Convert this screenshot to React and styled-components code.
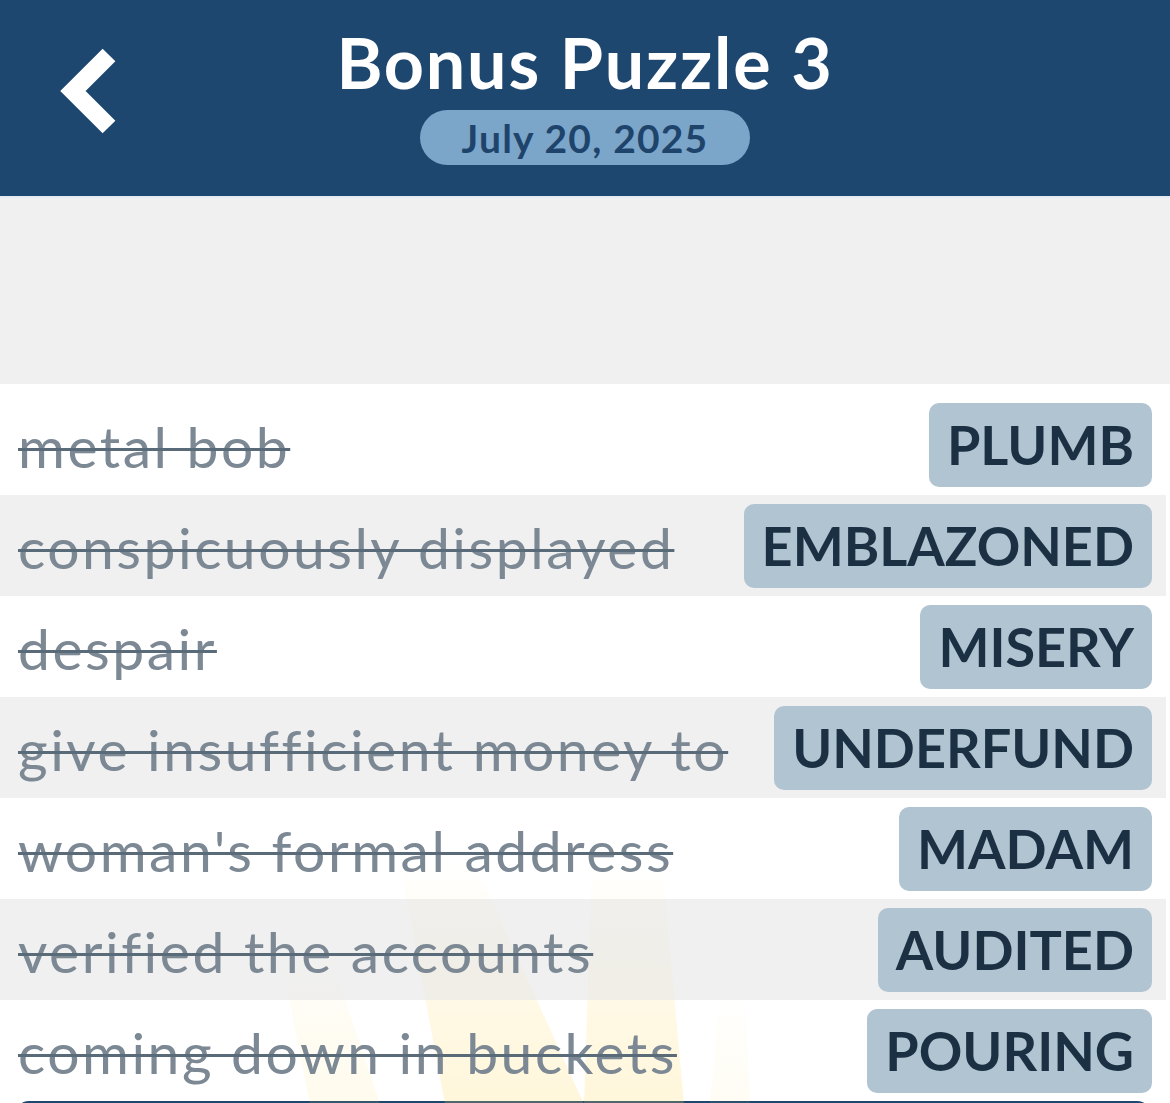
import React from 'react';
import styled, { createGlobalStyle } from 'styled-components';

const GlobalStyle = createGlobalStyle`
    html, body {
        margin: 0;
        padding: 0;
        background: #ffffff;
    }
    body {
        font-family: Lato, "Open Sans", sans-serif;
        overflow: hidden;
    }
`;

const clues = [
    { clue: 'metal bob', answer: 'PLUMB' },
    { clue: 'conspicuously displayed', answer: 'EMBLAZONED' },
    { clue: 'despair', answer: 'MISERY' },
    { clue: 'give insufficient money to', answer: 'UNDERFUND' },
    { clue: "woman's formal address", answer: 'MADAM' },
    { clue: 'verified the accounts', answer: 'AUDITED' },
    { clue: 'coming down in buckets', answer: 'POURING' },
];

const BackIcon = () => (
    <svg width="60" height="100" viewBox="0 0 60 100">
        <path d="M51 8 L15 44 L51 80" fill="none" stroke="#ffffff" strokeWidth="18" strokeLinejoin="miter" />
    </svg>
);

const Rays = () => (
    <svg width="600" height="260" viewBox="0 0 600 260">
        <defs>
            <linearGradient id="ray" x1="0" y1="0" x2="0" y2="1">
                <stop offset="0" stopColor="#ffd75a" stopOpacity="0" />
                <stop offset="0.35" stopColor="#ffd75a" stopOpacity="0.12" />
                <stop offset="1" stopColor="#ffd75a" stopOpacity="0.22" />
            </linearGradient>
        </defs>
        <polygon points="130,20 205,20 314,260 175,260" fill="url(#ray)" />
        <polygon points="322,20 392,20 414,260 314,260" fill="url(#ray)" />
        <polygon points="10,110 60,110 110,260 40,260" fill="url(#ray)" opacity="0.5" />
        <polygon points="450,150 475,150 480,260 440,260" fill="url(#ray)" opacity="0.3" />
    </svg>
);

const App = () => {
    return (
        <Page>
            <GlobalStyle />
            <Header>
                <BackButton aria-label="back">
                    <BackIcon />
                </BackButton>
                <Title>Bonus Puzzle 3</Title>
                <DatePill>July 20, 2025</DatePill>
            </Header>
            <Spacer />
            <List>
                <RaysLayer>
                    <Rays />
                </RaysLayer>
                {clues.map((item, i) => (
                    <Row key={item.answer} shaded={i % 2 === 1}>
                        <Clue>{item.clue}</Clue>
                        <Answer>{item.answer}</Answer>
                    </Row>
                ))}
                <BottomBar />
            </List>
        </Page>
    );
};

export default App;

const Page = styled.div`
    width: 1170px;
    min-height: 1103px;
    display: flex;
    flex-direction: column;
    background: #ffffff;
`;

const Header = styled.header`
    position: relative;
    height: 196px;
    background: #1e4770;
    display: flex;
    flex-direction: column;
    align-items: center;
    border-bottom: 2px solid #e4ebf2;
    box-sizing: content-box;
`;

const BackButton = styled.button`
    position: absolute;
    left: 58px;
    top: 47px;
    padding: 0;
    border: none;
    background: transparent;
    display: flex;
`;

const Title = styled.h1`
    margin: 20px 0 0;
    font-family: Lato, "Open Sans", sans-serif;
    font-weight: 700;
    font-size: 70px;
    line-height: 84px;
    color: #ffffff;
    letter-spacing: 1.8px;
`;

const DatePill = styled.div`
    margin-top: 6px;
    width: 330px;
    height: 55px;
    border-radius: 28px;
    background: #7ba6ca;
    color: #1f446b;
    font-family: Lato, "Open Sans", sans-serif;
    font-weight: 700;
    font-size: 39px;
    display: flex;
    align-items: center;
    justify-content: center;
    letter-spacing: 1.2px;
`;

const Spacer = styled.div`
    height: 186px;
    background: #f0f0f0;
`;

const List = styled.section`
    position: relative;
    display: flex;
    flex-direction: column;
    padding: 10px 4px 0 0;
    background: #ffffff;
`;

const RaysLayer = styled.div`
    position: absolute;
    left: 270px;
    top: 460px;
    pointer-events: none;
    z-index: 0;
`;

const Row = styled.div`
    position: relative;
    height: 101px;
    display: flex;
    align-items: center;
    justify-content: space-between;
    padding: 0 14px 0 18px;
    background: ${props => (props.shaded ? 'rgba(230, 230, 230, 0.6)' : 'transparent')};
`;

const Clue = styled.span`
    position: relative;
    z-index: 1;
    margin-right: -2.5px;
    padding-top: 3px;
    font-family: Lato, "Open Sans", sans-serif;
    font-size: 57px;
    letter-spacing: 2.5px;
    color: #7c8893;
    text-decoration: line-through;
    text-decoration-color: #596a79;
    text-decoration-thickness: 3px;
    white-space: nowrap;
`;

const Answer = styled.span`
    position: relative;
    z-index: 1;
    height: 84px;
    display: flex;
    align-items: center;
    padding: 0 18px;
    border-radius: 10px;
    background: #b0c4d1;
    color: #1c3044;
    font-family: Lato, "Open Sans", sans-serif;
    font-weight: 700;
    font-size: 54px;
    white-space: nowrap;
`;

const BottomBar = styled.div`
    margin: 0 15px 0 15px;
    height: 60px;
    border-radius: 14px 14px 0 0;
    background: #1e4770;
`;
